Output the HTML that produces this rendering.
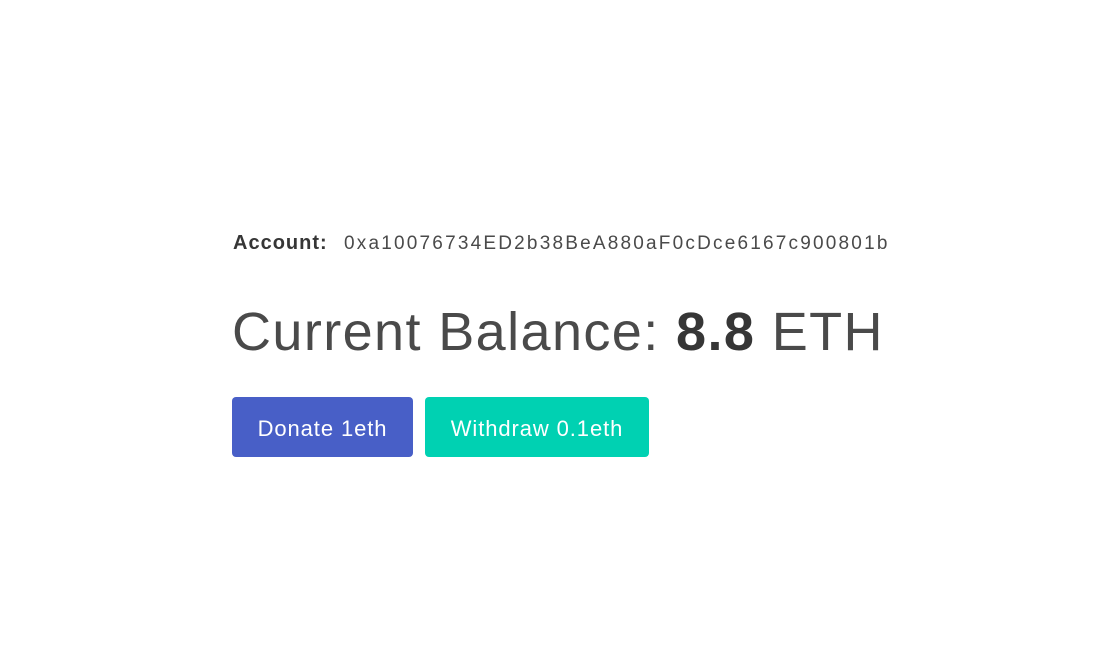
<!DOCTYPE html>
<html><head><style>
body{margin:0;background:#fff;font-family:"Liberation Sans",sans-serif;color:#4a4a4a;}
.acct{position:absolute;left:233px;top:232px;font-size:19px;white-space:nowrap;}
.acct b{color:#363636;display:inline-block;width:111px;letter-spacing:1px;font-size:20px;}
.acct span{letter-spacing:2.2px;}
h1{position:absolute;left:232px;top:296px;margin:0;font-weight:400;font-size:54px;letter-spacing:1.4px;white-space:nowrap;line-height:72px;}
h1 b{color:#363636;}
.btn{position:absolute;top:397px;height:60px;border-radius:4px;color:#fff;font-size:22px;line-height:63px;text-align:center;letter-spacing:0.9px;}
</style></head><body>
<div class="acct"><b>Account:</b><span>0xa10076734ED2b38BeA880aF0cDce6167c900801b</span></div>
<h1>Current Balance: <b>8.8</b> ETH</h1>
<div class="btn" style="left:232px;width:181px;background:#485fc7">Donate 1eth</div>
<div class="btn" style="left:425px;width:224px;background:#00d1b2">Withdraw 0.1eth</div>
</body></html>
